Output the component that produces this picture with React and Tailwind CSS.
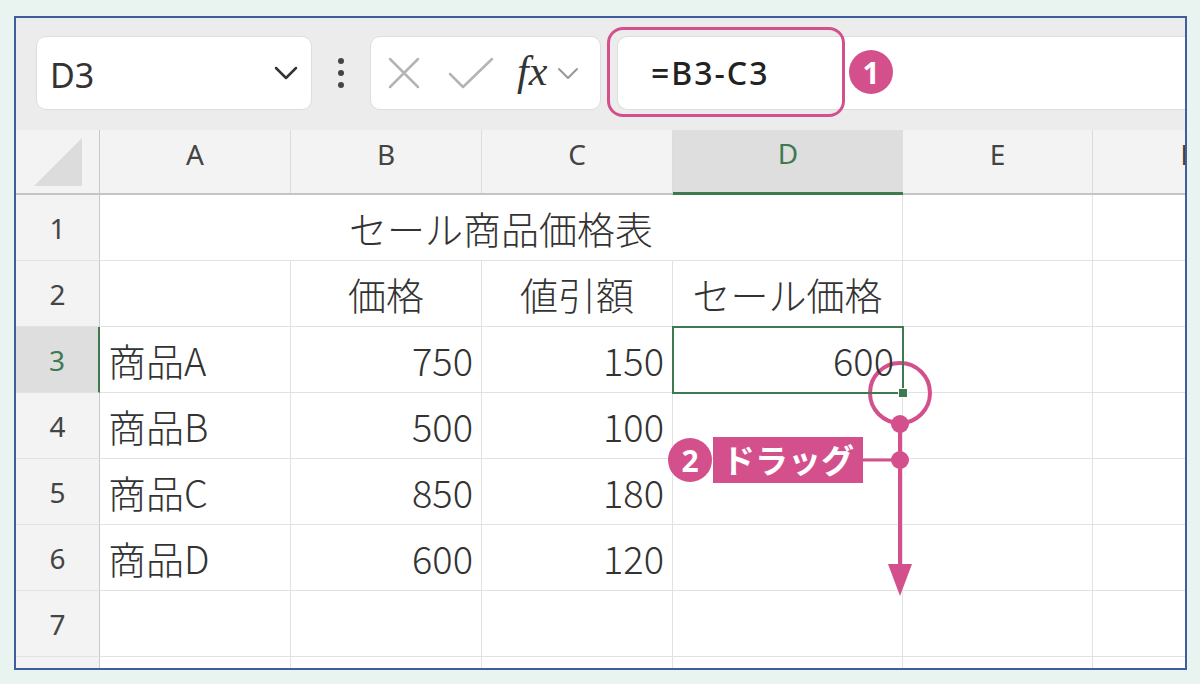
import React from "react";

const PINK = "#d4508d";

const cols = [
    { key: "A", w: "w-[191px]" },
    { key: "B", w: "w-[191px]" },
    { key: "C", w: "w-[191px]" },
    { key: "D", w: "w-[230px]" },
    { key: "E", w: "w-[190px]" },
    { key: "F", w: "w-[190px]" },
];

const items = [
    { row: 3, name: "商品A", price: 750, off: 150, sale: 600 },
    { row: 4, name: "商品B", price: 500, off: 100 },
    { row: 5, name: "商品C", price: 850, off: 180 },
    { row: 6, name: "商品D", price: 600, off: 120 },
];

const cellFont = { fontFamily: '"Noto Sans CJK JP", "Noto Sans", sans-serif' };
const headFont = { fontFamily: '"Noto Sans", "Open Sans", sans-serif' };

const RowHead = ({ n, active }) => (
    <div
        style={headFont}
        className={
            "w-[84px] shrink-0 flex items-center justify-center text-[28px] border-b border-[#e2e2e2] " +
            (active
                ? "bg-[#dedede] text-[#3d7a4f] border-r-2 border-r-[#3d7a4f]"
                : "bg-[#f3f3f3] text-[#444] border-r border-r-[#c9c9c9]")
        }
    >
        {n}
    </div>
);

const Cell = ({ w, align = "left", children, extra = "" }) => (
    <div
        style={cellFont}
        className={
            w +
            " shrink-0 relative flex items-center text-[38px] font-light text-[#333] border-r border-b border-[#e2e2e2] " +
            (align === "right" ? "justify-end pr-2 " : align === "center" ? "justify-center " : "justify-start pl-2 ") +
            extra
        }
    >
        {children}
    </div>
);

const Toolbar = () => (
    <div className="h-[112px] bg-[#ececec] flex items-start pt-[18px] pl-[20px] shrink-0">
        {/* name box */}
        <div className="w-[276px] h-[74px] bg-white rounded-[10px] border border-[#dddddd] flex items-center justify-between pl-[13px] pr-[12px]">
            <span style={headFont} className="text-[34px] text-[#333] mt-[4px]">D3</span>
            <svg width="26" height="16" viewBox="0 0 26 16">
                <polyline points="3,3 13,13 23,3" fill="none" stroke="#333" strokeWidth="2.5" strokeLinecap="round" strokeLinejoin="round" />
            </svg>
        </div>
        <div className="w-[58px] h-[74px] flex flex-col items-center justify-center gap-[6px]">
            <span className="w-[6px] h-[6px] rounded-full bg-[#444]" />
            <span className="w-[6px] h-[6px] rounded-full bg-[#444]" />
            <span className="w-[6px] h-[6px] rounded-full bg-[#444]" />
        </div>
        {/* cancel / enter / fx */}
        <div className="w-[231px] h-[74px] bg-white rounded-[10px] border border-[#dddddd] flex items-center pl-[16px]">
            <svg width="34" height="34" viewBox="0 0 34 34">
                <path d="M3 3 L31 31 M31 3 L3 31" stroke="#b4b4b4" strokeWidth="2.5" strokeLinecap="round" />
            </svg>
            <svg width="48" height="34" viewBox="0 0 48 34" className="ml-[26px]">
                <polyline points="3,18 16,31 45,3" fill="none" stroke="#b4b4b4" strokeWidth="2.5" strokeLinecap="round" strokeLinejoin="round" />
            </svg>
            <span
                style={{ fontFamily: '"Liberation Serif", "DejaVu Serif", serif' }}
                className="ml-[22px] text-[42px] italic text-[#333] leading-none -mt-[4px]"
            >
                fx
            </span>
            <svg width="22" height="14" viewBox="0 0 22 14" className="ml-[10px]">
                <polyline points="2,3 11,12 20,3" fill="none" stroke="#999" strokeWidth="2" strokeLinecap="round" strokeLinejoin="round" />
            </svg>
        </div>
        {/* formula input */}
        <div className="ml-[16px] flex-1 h-[74px] bg-white rounded-l-[10px] border border-r-0 border-[#dddddd] flex items-center pl-[33px]">
            <span style={headFont} className="text-[32px] font-medium text-[#222] tracking-[2px]">=B3-C3</span>
        </div>
    </div>
);

const HeaderRow = () => (
    <div className="flex h-[65px] shrink-0 border-b-2 border-[#c4c4c4]">
        <div className="w-[84px] shrink-0 bg-[#f3f3f3] border-r border-[#c9c9c9] flex items-center justify-center">
            <svg width="52" height="52" viewBox="0 0 52 52">
                <polygon points="50,2 50,50 2,50" fill="#dcdcdc" />
            </svg>
        </div>
        {cols.map((c) => (
            <div
                key={c.key}
                style={headFont}
                className={
                    c.w +
                    " shrink-0 flex items-center justify-center pb-[16px] text-[28px] " +
                    (c.key === "D"
                        ? "bg-[#dedede] text-[#3d7a4f] border-b-[3px] border-[#3d7a4f] -mb-[2px]"
                        : "bg-[#f3f3f3] text-[#444] border-r border-[#dcdcdc]")
                }
            >
                {c.key}
            </div>
        ))}
    </div>
);

export default function App() {
    return (
        <div className="w-[1200px] h-[684px] bg-[#e9f3ef] pl-[14px] pt-[16px] relative overflow-hidden">
            <div className="w-[1173px] h-[654px] border-2 border-[#3f5e9d] bg-white flex flex-col overflow-hidden">
                <Toolbar />
                <HeaderRow />

                {/* row 1: title merged A:D */}
                <div className="flex h-[66px] shrink-0">
                    <RowHead n={1} />
                    <Cell w="w-[803px]" align="center">セール商品価格表</Cell>
                    <Cell w="w-[190px]" />
                    <Cell w="w-[190px]" />
                </div>

                {/* row 2: column titles */}
                <div className="flex h-[66px] shrink-0">
                    <RowHead n={2} />
                    <Cell w="w-[191px]" />
                    <Cell w="w-[191px]" align="center">価格</Cell>
                    <Cell w="w-[191px]" align="center">値引額</Cell>
                    <Cell w="w-[230px]" align="center">セール価格</Cell>
                    <Cell w="w-[190px]" />
                    <Cell w="w-[190px]" />
                </div>

                {items.map((it) => (
                    <div key={it.row} className="flex h-[66px] shrink-0">
                        <RowHead n={it.row} active={it.row === 3} />
                        <Cell w="w-[191px]">{it.name}</Cell>
                        <Cell w="w-[191px]" align="right">{it.price}</Cell>
                        <Cell w="w-[191px]" align="right">{it.off}</Cell>
                        <Cell
                            w="w-[230px]"
                            align="right"
                            extra={it.row === 3 ? "outline-2 outline-[#3d7a4f] -outline-offset-1 z-10" : ""}
                        >
                            {it.sale}
                            {it.row === 3 && (
                                <span className="absolute -right-[6px] -bottom-[6px] w-[10px] h-[10px] bg-[#3d7a4f] border border-white" />
                            )}
                        </Cell>
                        <Cell w="w-[190px]" />
                        <Cell w="w-[190px]" />
                    </div>
                ))}

                <div className="flex h-[66px] shrink-0">
                    <RowHead n={7} />
                    {cols.map((c) => (
                        <Cell key={c.key} w={c.w} />
                    ))}
                </div>
                <div className="flex h-[66px] shrink-0">
                    <RowHead n="" />
                    {cols.map((c) => (
                        <Cell key={c.key} w={c.w} />
                    ))}
                </div>
            </div>

            {/* callout 1: formula box */}
            <div
                className="absolute left-[607px] top-[27px] w-[238px] h-[90px] rounded-[16px] border-[3px] pointer-events-none"
                style={{ borderColor: PINK }}
            />
            <div
                className="absolute left-[849px] top-[50px] w-[44px] h-[44px] rounded-full flex items-center justify-center text-white text-[30px] font-bold"
                style={{ backgroundColor: PINK, fontFamily: '"Noto Sans", sans-serif' }}
            >
                1
            </div>

            {/* callout 2: drag the fill handle */}
            <svg className="absolute left-0 top-0 pointer-events-none" width="1200" height="684" viewBox="0 0 1200 684">
                <circle cx="900" cy="393" r="30" fill="none" stroke={PINK} strokeWidth="4" />
                <line x1="900" y1="423" x2="900" y2="568" stroke={PINK} strokeWidth="4" />
                <line x1="860" y1="460" x2="900" y2="460" stroke={PINK} strokeWidth="3" />
                <circle cx="900" cy="424" r="9" fill={PINK} />
                <circle cx="900" cy="460" r="9" fill={PINK} />
                <polygon points="888,564 912,564 900,596" fill={PINK} />
            </svg>
            <div
                className="absolute left-[668px] top-[438px] w-[44px] h-[44px] rounded-full flex items-center justify-center text-white text-[30px] font-bold"
                style={{ backgroundColor: PINK, fontFamily: '"Noto Sans", sans-serif' }}
            >
                2
            </div>
            <div
                className="absolute left-[713px] top-[437px] w-[150px] h-[46px] flex items-center justify-center text-white text-[33px] font-bold"
                style={{ backgroundColor: PINK, ...cellFont }}
            >
                ドラッグ
            </div>
        </div>
    );
}
